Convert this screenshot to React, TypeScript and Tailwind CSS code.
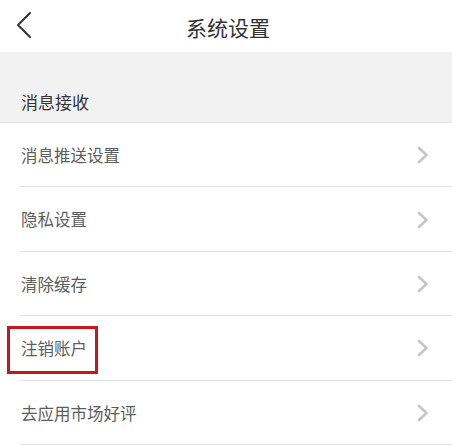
const rows = [
  { label: "消息推送设置" },
  { label: "隐私设置" },
  { label: "清除缓存" },
  { label: "注销账户", marked: true },
  { label: "去应用市场好评" },
];

export default function App() {
  return (
    <div
      className="w-[452px] h-[445px] bg-white overflow-hidden"
      style={{ fontFamily: '"Noto Sans CJK SC", "Noto Sans", sans-serif' }}
    >
      {/* Header */}
      <div className="relative h-[52px] flex items-center justify-center">
        <button className="absolute left-[14px] top-[10px] w-[20px] h-[30px] flex items-center justify-center">
          <svg width="18" height="28" viewBox="0 0 18 28" fill="none">
            <path d="M15 2 L3 14 L15 26" stroke="#333" strokeWidth="2" strokeLinecap="round" strokeLinejoin="round" />
          </svg>
        </button>
        <h1 className="text-[21px] leading-none text-[#333] ml-[4px] mt-[2px]">系统设置</h1>
      </div>

      {/* Section header */}
      <div className="h-[71px] bg-[#f2f2f2] flex items-end pl-[21px] pb-[12px] border-b border-[#e2e2e2]">
        <span className="text-[17px] leading-none text-[#333]">消息接收</span>
      </div>

      {/* Rows */}
      <div className="pl-[20px]">
        {rows.map((row) => (
          <div key={row.label} className="relative h-[64.4px] flex items-center justify-between border-b border-[#e2e2e2]">
            <span className="text-[16.5px] leading-none text-[#5e5e5e] pl-[1px] mt-[1px]">{row.label}</span>
            <svg width="12" height="18" viewBox="0 0 12 18" fill="none" className="mr-[23px] mt-[1px]">
              <path d="M2 2 L9.5 9 L2 16" stroke="#c6c6c6" strokeWidth="2.6" strokeLinecap="round" strokeLinejoin="round" />
            </svg>
            {row.marked && (
              <div className="absolute left-[-13px] top-[10px] w-[91px] h-[48px] border-[3px] border-[#c8161d]" />
            )}
          </div>
        ))}
      </div>
    </div>
  );
}
